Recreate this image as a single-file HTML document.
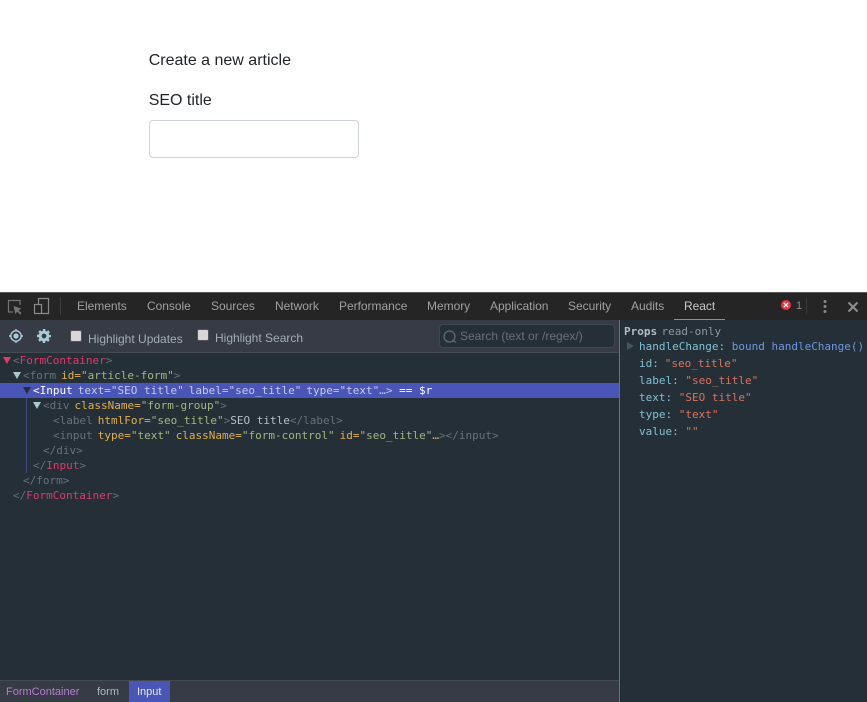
<!DOCTYPE html>
<html>
<head>
<meta charset="utf-8">
<style>
html,body{margin:0;padding:0;width:867px;height:702px;overflow:hidden;background:#fff}
#root{position:relative;width:867px;height:702px;overflow:hidden;font-family:"Liberation Sans",sans-serif}
.a{position:absolute;white-space:pre}
.t{position:absolute;top:293px;height:27px;line-height:27px;font-size:12px;color:#a0a0a0;white-space:pre;letter-spacing:-.03px}
.r{position:absolute;height:15px;line-height:15px;font-family:"DejaVu Sans Mono",monospace;font-size:11px;white-space:pre;color:#8a9aa3;word-spacing:-1.6px}
.g{color:#65727a}.n{color:#e0396a}.k{color:#e0b04e}.v{color:#9fb87f;word-spacing:0}.w{color:#b3c0c7;word-spacing:0}
.hl{color:#c5cbe8}
.hv{word-spacing:0}
.p{position:absolute;height:17px;line-height:17px;font-family:"DejaVu Sans Mono",monospace;font-size:11px;white-space:pre;color:#80c0d4}
.s{color:#d9745a;word-spacing:0}.b{color:#6f97e0}
.tri{position:absolute;width:0;height:0;border-left:4px solid transparent;border-right:4px solid transparent;border-top:7px solid #a9c8d0}
.cb{position:absolute;width:10px;height:10px;background:#d6d6d6;border:1px solid #555;border-radius:2px;box-sizing:content-box}
</style>
</head>
<body>
<div id="root">
<div class="a" style="left:148.7px;top:51px;font-size:16px;line-height:19px;color:#212529">Create a new article</div>
<div class="a" style="left:148.7px;top:91px;font-size:16px;line-height:19px;color:#212529">SEO title</div>
<div class="a" style="left:149px;top:120px;width:208px;height:36px;border:1px solid #ced4da;border-radius:4px;background:#fff"></div>

<div class="a" style="left:0;top:292px;width:867px;height:1px;background:#555"></div>
<div class="a" style="left:0;top:293px;width:867px;height:27px;background:#252525"></div>
<svg class="a" style="left:0;top:293px" width="60" height="27" viewBox="0 0 60 27" fill="none">
<path d="M20 12V7.5H8.5v11.5H13" stroke="#757575" stroke-width="1.2"/>
<path d="M13.5 13l2 8.5 1.6-3 3 3 1.4-1.4-3-3 3-1.5z" fill="#757575"/>
<path d="M38.5 11V5.5h10v15h-7" stroke="#8a8a8a" stroke-width="1.2"/>
<rect x="34.5" y="11.5" width="7" height="9" stroke="#8a8a8a" stroke-width="1.2"/>
</svg>
<div class="a" style="left:60px;top:297px;width:1px;height:18px;background:#3f3f3f"></div>
<div class="t" style="left:77px">Elements</div>
<div class="t" style="left:147px">Console</div>
<div class="t" style="left:211px">Sources</div>
<div class="t" style="left:275px">Network</div>
<div class="t" style="left:339px">Performance</div>
<div class="t" style="left:427px">Memory</div>
<div class="t" style="left:490px">Application</div>
<div class="t" style="left:568px">Security</div>
<div class="t" style="left:631px">Audits</div>
<div class="t" style="left:684px;color:#c8c8c8">React</div>
<div class="a" style="left:674px;top:319px;width:51px;height:1px;background:#c08a25"></div>
<svg class="a" style="left:780px;top:299px" width="12" height="12" viewBox="0 0 12 12">
<circle cx="6" cy="6" r="5" fill="#e8343f"/>
<path d="M3.8 3.8l4.4 4.4M8.2 3.8L3.8 8.2" stroke="#fff" stroke-width="1.3"/>
</svg>
<div class="a" style="left:796px;top:293px;height:27px;line-height:27px;font-size:11px;color:#8a8a8a">1</div>
<div class="a" style="left:806px;top:298px;width:1px;height:16px;background:#3a3a3a"></div>
<svg class="a" style="left:818px;top:298px" width="14" height="18" viewBox="0 0 14 18" fill="#8a8a8a">
<circle cx="7" cy="3.5" r="1.5"/><circle cx="7" cy="8.5" r="1.5"/><circle cx="7" cy="13.5" r="1.5"/>
</svg>
<svg class="a" style="left:846px;top:300px" width="14" height="14" viewBox="0 0 14 14">
<path d="M2.5 2.5l9 9M11.5 2.5l-9 9" stroke="#8f8f8f" stroke-width="2"/>
</svg>

<div class="a" style="left:0;top:320px;width:867px;height:382px;background:#252f38"></div>
<div class="a" style="left:0;top:320px;width:619px;height:32px;background:#363b45"></div>
<div class="a" style="left:0;top:352px;width:619px;height:1px;background:#454a50"></div>
<div class="a" style="left:619px;top:320px;width:1px;height:382px;background:#6b7075"></div>

<svg class="a" style="left:7px;top:327px" width="18" height="18" viewBox="0 0 18 18" fill="none">
<circle cx="9" cy="9" r="5.2" stroke="#a9cdd8" stroke-width="1.4"/>
<circle cx="9" cy="9" r="2.6" fill="#a9cdd8"/>
<path d="M9 2v1.8M9 14.2V16M2 9h1.8M14.2 9H16" stroke="#a9cdd8" stroke-width="1.4"/>
</svg>
<svg class="a" style="left:36px;top:328px" width="16" height="16" viewBox="0 0 16 16" fill="none">
<circle cx="8" cy="8" r="3.9" stroke="#a9cdd8" stroke-width="3"/>
<circle cx="8" cy="8" r="6" stroke="#a9cdd8" stroke-width="2" stroke-dasharray="2.4 2.31" stroke-dashoffset="1.2"/>
</svg>
<div class="cb" style="left:70px;top:330px"></div>
<div class="a" style="left:88px;top:332px;font-size:12px;line-height:15px;color:#a3adb5">Highlight Updates</div>
<div class="cb" style="left:197px;top:329px"></div>
<div class="a" style="left:215px;top:331px;font-size:12px;line-height:15px;color:#a3adb5">Highlight Search</div>
<div class="a" style="left:439px;top:324px;width:174px;height:22px;background:#252f38;border:1px solid #3f4750;border-radius:4px"></div>
<svg class="a" style="left:442px;top:329px" width="16" height="16" viewBox="0 0 16 16" fill="none">
<circle cx="7.5" cy="7.5" r="5.5" stroke="#5f6b73" stroke-width="1.3"/>
<path d="M11.5 11.5l2 2" stroke="#5f6b73" stroke-width="1.3"/>
</svg>
<div class="a" style="left:460px;top:329px;font-size:12px;line-height:15px;color:#66717a">Search (text or /regex/)</div>

<div class="a" style="left:0;top:383px;width:619px;height:15px;background:#4a55b8"></div>
<div class="a" style="left:26px;top:398px;width:1px;height:75px;background:#3f4a85"></div>
<div class="tri" style="left:3px;top:357px;border-top-color:#e0396a"></div>
<div class="tri" style="left:13px;top:372px"></div>
<div class="tri" style="left:23px;top:387px;border-top-color:#252f38"></div>
<div class="tri" style="left:33px;top:402px"></div>

<div class="r" style="left:13px;top:353px"><span class="g">&lt;</span><span class="n">FormContainer</span><span class="g">&gt;</span></div>
<div class="r" style="left:23px;top:368px"><span class="g">&lt;form</span> <span class="k">id=</span><span class="v">"article-form"</span><span class="g">&gt;</span></div>
<div class="r hl" style="left:33px;top:383px"><span style="color:#fff">&lt;Input</span> <span class="hv">text="SEO title"</span> <span class="hv">label="seo_title"</span> <span class="hv">type="text"…&gt;</span><span class="hv" style="color:#fff"> == $r</span></div>
<div class="r" style="left:43px;top:398px"><span class="g">&lt;div</span> <span class="k">className=</span><span class="v">"form-group"</span><span class="g">&gt;</span></div>
<div class="r" style="left:53px;top:413px"><span class="g">&lt;label</span> <span class="k">htmlFor=</span><span class="v">"seo_title"</span><span class="g">&gt;</span><span class="w">SEO title</span><span class="g">&lt;/label&gt;</span></div>
<div class="r" style="left:53px;top:428px"><span class="g">&lt;input</span> <span class="k">type=</span><span class="v">"text"</span> <span class="k">className=</span><span class="v">"form-control"</span> <span class="k">id=</span><span class="v">"seo_title"</span><span class="k">…</span><span class="g">&gt;&lt;/input&gt;</span></div>
<div class="r" style="left:43px;top:443px"><span class="g">&lt;/div&gt;</span></div>
<div class="r" style="left:33px;top:458px"><span class="g">&lt;/</span><span class="n">Input</span><span class="g">&gt;</span></div>
<div class="r" style="left:23px;top:473px"><span class="g">&lt;/form&gt;</span></div>
<div class="r" style="left:13px;top:488px"><span class="g">&lt;/</span><span class="n">FormContainer</span><span class="g">&gt;</span></div>

<div class="p" style="left:624px;top:323px;color:#8d989f;word-spacing:-2.2px"><b style="color:#b3bdc3">Props</b> read-only</div>
<div class="a" style="left:627px;top:342px;width:0;height:0;border-top:4px solid transparent;border-bottom:4px solid transparent;border-left:7px solid #47555c"></div>
<div class="p" style="left:639px;top:338px">handleChange: <span class="b">bound handleChange()</span></div>
<div class="p" style="left:639px;top:355px;word-spacing:-.8px">id: <span class="s">"seo_title"</span></div>
<div class="p" style="left:639px;top:372px">label: <span class="s">"seo_title"</span></div>
<div class="p" style="left:639px;top:389px">text: <span class="s">"SEO title"</span></div>
<div class="p" style="left:639px;top:406px">type: <span class="s">"text"</span></div>
<div class="p" style="left:639px;top:423px">value: <span class="s">""</span></div>

<div class="a" style="left:0;top:680px;width:619px;height:22px;background:#363b45"></div>
<div class="a" style="left:0;top:680px;width:619px;height:1px;background:#454a50"></div>
<div class="a" style="left:129px;top:681px;width:41px;height:21px;background:#4a55b8"></div>
<div class="a" style="left:6px;top:682px;height:21px;line-height:21px;font-size:11px;color:#b77ed0">FormContainer</div>
<div class="a" style="left:97px;top:682px;height:21px;line-height:21px;font-size:11px;color:#a9bcc4">form</div>
<div class="a" style="left:137px;top:682px;height:21px;line-height:21px;font-size:11px;color:#e4e8f5">Input</div>
</div>
</body>
</html>
